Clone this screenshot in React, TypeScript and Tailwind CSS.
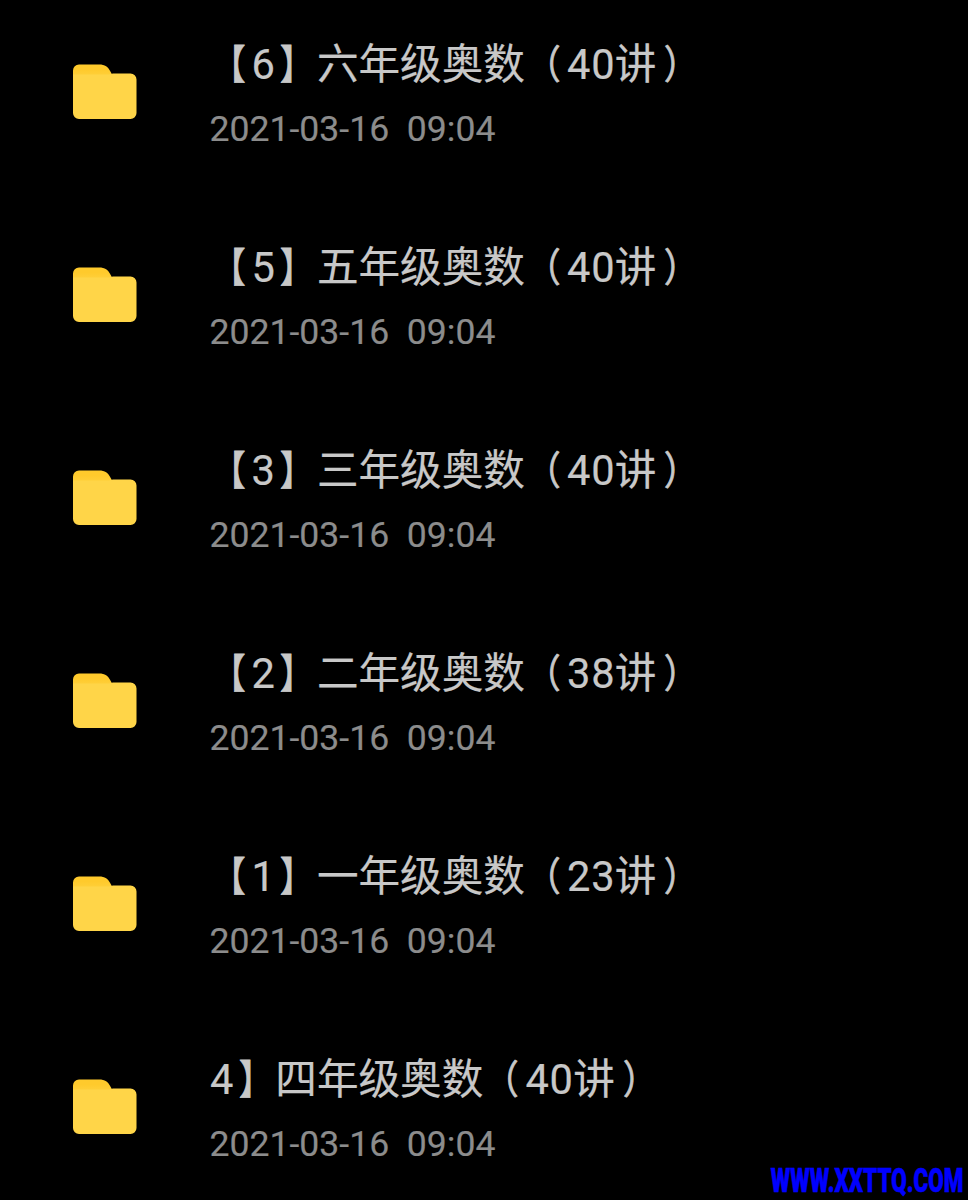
const folders = [
  { name: "【6】六年级奥数（40讲）", date: "2021-03-16  09:04" },
  { name: "【5】五年级奥数（40讲）", date: "2021-03-16  09:04" },
  { name: "【3】三年级奥数（40讲）", date: "2021-03-16  09:04" },
  { name: "【2】二年级奥数（38讲）", date: "2021-03-16  09:04" },
  { name: "【1】一年级奥数（23讲）", date: "2021-03-16  09:04" },
  { name: "4】四年级奥数（40讲）", date: "2021-03-16  09:04" },
];

// Full-width brackets sit a little further from the digits than the font puts them
const bracketStyles: Record<string, string> = {
  "【": "inline-block origin-right -translate-x-[6px] scale-x-[0.8] scale-y-[0.97] [-webkit-text-stroke:0.8px]",
  "】": "inline-block origin-left translate-x-[5px] scale-x-[0.8] scale-y-[0.97] [-webkit-text-stroke:0.8px]",
  "（": "inline-block origin-right -translate-x-[6px] scale-x-[0.8] scale-y-[0.94] [-webkit-text-stroke:0.9px]",
  "）": "inline-block origin-left translate-x-[8px] scale-x-[0.8] scale-y-[0.94] [-webkit-text-stroke:0.9px]",
};

function FolderIcon() {
  return (
    <svg viewBox="0 0.5 64 56" className="mt-9 h-14 w-16 shrink-0" aria-hidden="true">
      <defs>
        <linearGradient id="tab" x1="0" y1="0" x2="0" y2="1">
          <stop offset="0.3" stopColor="#ffca2c" />
          <stop offset="1" stopColor="#ffd548" />
        </linearGradient>
      </defs>
      <path d="M0 7a6 6 0 0 1 6-6h20c6 0 9 2 12 8l2 4v5H0z" fill="url(#tab)" />
      <path d="M0 11h36c2 0 2-1 4-1h17.500a6 6 0 0 1 6 6v33.500a6 6 0 0 1-6 6H6a6 6 0 0 1-6-6z" fill="#ffd548" />
    </svg>
  );
}

function FolderName({ name }: { name: string }) {
  return (
    <p className="h-[72px] text-[41.6px] leading-[74px] text-[#c8c8c8] [-webkit-text-stroke:0.2px]">
      {name.split(/([【】（）]|\d+)/).filter(Boolean).map((part, index) => (
        <span key={index} className={/\d/.test(part) ? "relative left-[0.5px] tracking-[0.8px]" : bracketStyles[part]}>{part}</span>
      ))}
    </p>
  );
}

export default function App() {
  return (
    <main className="relative h-[1200px] w-[968px] overflow-hidden bg-black pt-7 font-['Roboto','Noto_Sans_CJK_SC',sans-serif]">
      {folders.map((folder) => (
        <div key={folder.name} className="flex h-[203px] gap-[72.5px] pl-[73px]">
          <FolderIcon />
          <div className="whitespace-pre">
            <FolderName name={folder.name} />
            <p className="text-[35.6px] leading-[58px] text-[#8c8c8c] [-webkit-text-stroke:0.2px]">{folder.date}</p>
          </div>
        </div>
      ))}
      <span className="absolute right-[5px] -bottom-px origin-right scale-x-[0.68] text-[33px] leading-10 font-black text-[#0000ff] [-webkit-text-stroke:0.6px]">WWW.XXTTQ.COM</span>
    </main>
  );
}
